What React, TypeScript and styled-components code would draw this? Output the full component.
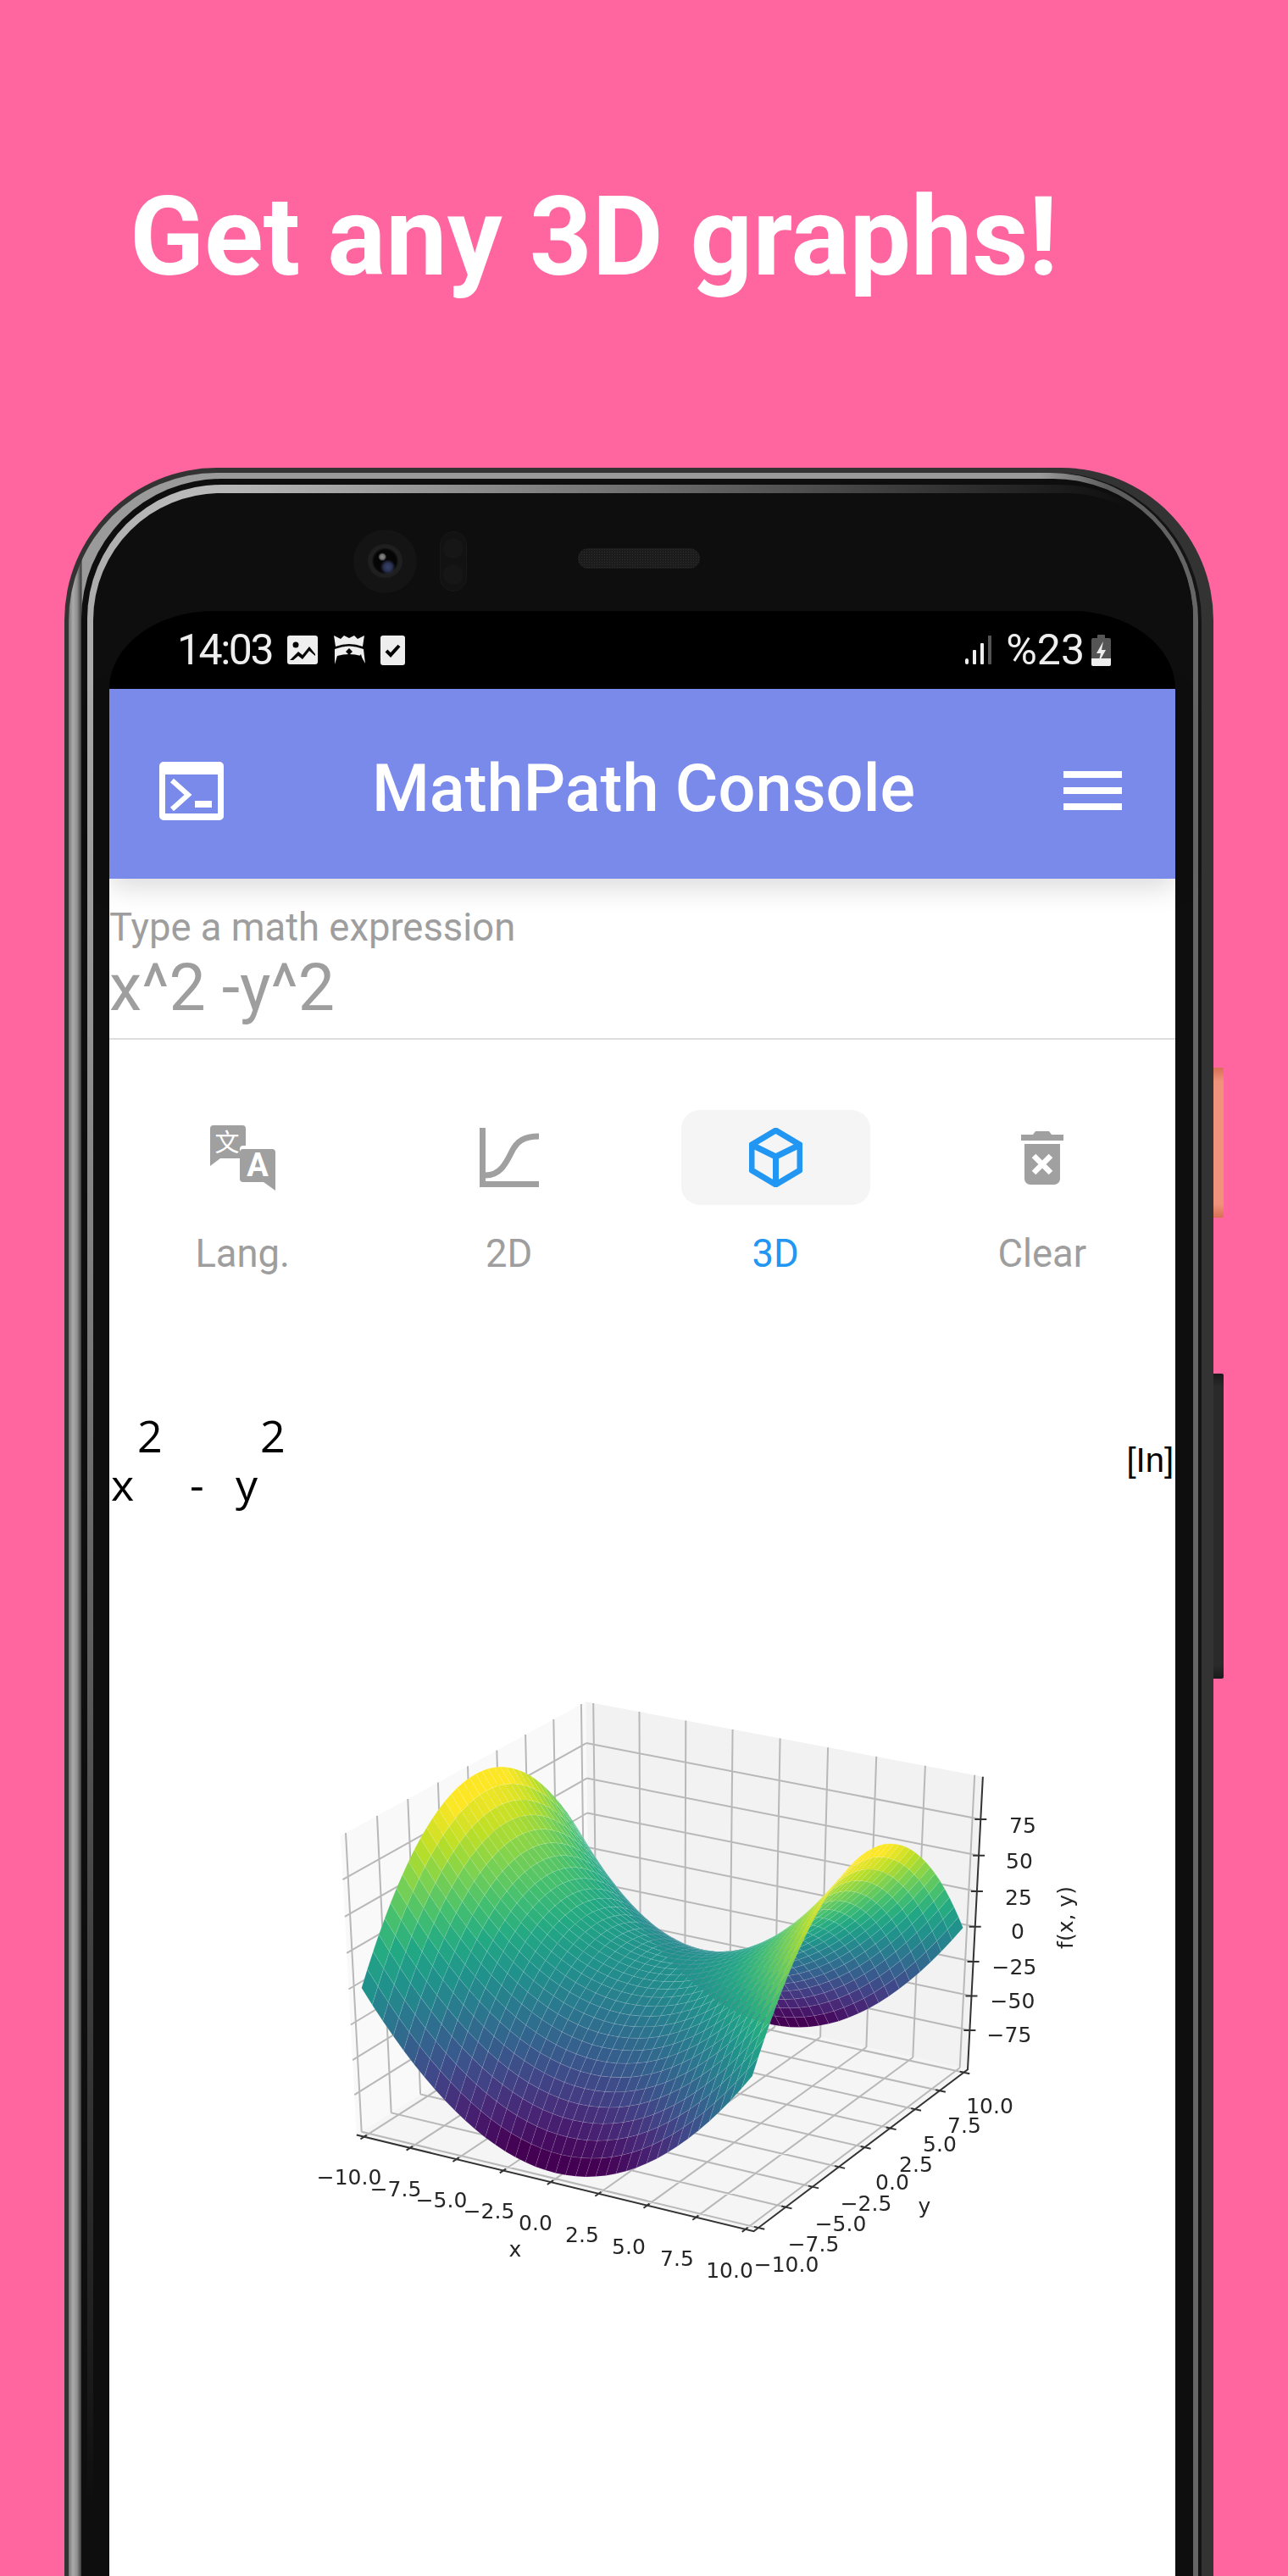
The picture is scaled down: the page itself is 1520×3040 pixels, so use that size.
import { useMemo } from 'react';
import styled, { createGlobalStyle } from 'styled-components';

const GlobalStyle = createGlobalStyle`
  html, body {
    margin: 0;
    padding: 0;
    background: #ff659f;
  }
`;

const Page = styled.div`
  width: 1520px;
  height: 3040px;
  overflow: hidden;
  background: #ff659f;
  font-family: Roboto, sans-serif;
`;

const Headline = styled.h1`
  margin: 0;
  height: 552px;
  box-sizing: border-box;
  padding: 204px 0 0 153px;
  color: #fff;
  font-size: 129px;
  line-height: 152px;
  font-weight: 700;
  white-space: nowrap;
`;

const PhoneWrap = styled.div`
  position: relative;
  width: 1356px;
  margin-left: 76px;
`;

const SideButton = styled.div<{ $top: number; $height: number; $body: string; $cap: string }>`
  position: absolute;
  left: 100%;
  top: ${(p) => p.$top}px;
  width: 12px;
  height: ${(p) => p.$height}px;
  border-radius: 0 2px 2px 0;
  background: linear-gradient(
    180deg,
    ${(p) => p.$cap} 0,
    ${(p) => p.$body} 16px,
    ${(p) => p.$body} calc(100% - 16px),
    ${(p) => p.$cap} 100%
  );
`;

const Frame = styled.div`
  background: #333;
  padding: 6px 18px 0 5px;
  border-radius: 180px 180px 0 0;
`;

const Shine = styled.div`
  padding: 7px 6px 0 15px;
  border-radius: 175px 175px 0 0;
  box-shadow: 4px 0 0 #141414;
  background: linear-gradient(
    90deg,
    #777 0,
    #aaa 5px,
    #909090 10px,
    #3c3c3c 15px,
    #9a9a9a 16px,
    #9a9a9a 86%,
    #5c5c5c 92%,
    #666 100%
  );
`;

const Gap = styled.div`
  background: #0e0e0e;
  padding: 7px 0 0 7px;
  border-radius: 165px 165px 0 0;
`;

const Band = styled.div`
  padding: 10px 0 0 7px;
  border-radius: 158px 158px 0 0;
  background: radial-gradient(1100px 2300px at 130px 100px, #c0c0c0 0%, #6a6a6a 50%, #0e0e0e 100%);
`;

const Bezel = styled.div`
  background: #0e0e0e;
  padding: 0 21px 0 19px;
  border-radius: 150px 150px 0 0;
`;

const SensorRow = styled.div`
  display: flex;
  align-items: center;
  height: 139px;
  box-sizing: border-box;
  padding: 21px 0 0 288px;
`;

const Camera = styled.div`
  display: flex;
  align-items: center;
  justify-content: center;
  width: 75px;
  height: 75px;
  border-radius: 50%;
  background: #141414;
`;

const Lens = styled.div`
  width: 41px;
  height: 40px;
  border-radius: 50%;
  background:
    radial-gradient(circle at 42% 38%, #8c8c8c 0, #6a6a6a 3px, transparent 5px),
    radial-gradient(circle at 58% 68%, #39446b 0, #2a3152 5px, transparent 9px),
    radial-gradient(circle at 50% 50%, #050505 0, #050505 13px, #202020 16px, #1a1a1a 100%);
`;

const SensorPill = styled.div`
  display: flex;
  flex-direction: column;
  align-items: center;
  justify-content: space-between;
  width: 32px;
  height: 71px;
  box-sizing: border-box;
  padding: 7px 0;
  margin-left: 27px;
  border-radius: 16px;
  background: #121212;
  border: 1px solid #181818;
`;

const SensorDot = styled.div`
  width: 24px;
  height: 24px;
  border-radius: 50%;
  background: #161616;
`;

const Speaker = styled.div`
  width: 144px;
  height: 24px;
  margin: 0 0 6px 131px;
  border-radius: 12px;
  background-color: #1c1c1c;
  background-image: radial-gradient(#2e2e2e 1px, transparent 1px);
  background-size: 3px 3px;
`;

const Screen = styled.div`
  height: 2400px;
  display: flex;
  flex-direction: column;
`;

const ScreenBody = styled.div`
  flex: 1;
  background: #fff;
`;

const StatusBar = styled.div`
  display: flex;
  align-items: center;
  justify-content: space-between;
  height: 92px;
  box-sizing: border-box;
  padding: 0 76px 0 80px;
  background: #000;
  border-radius: 123px 123px 0 0 / 92px 92px 0 0;
  color: #eee;
  font-size: 50px;
`;

const StatusGroup = styled.div<{ $gap: number }>`
  display: flex;
  align-items: center;
  gap: ${(p) => p.$gap}px;
`;

const StatusText = styled.span`
  letter-spacing: -2.5px;
  line-height: 48px;
`;

const StatusPercent = styled.span`
  line-height: 48px;
  margin-right: -9px;
`;

const AppBar = styled.header`
  position: relative;
  display: flex;
  align-items: center;
  justify-content: space-between;
  height: 224px;
  box-sizing: border-box;
  padding: 16px 63px 0 59px;
  background: #7a8aea;
  box-shadow: 0 8px 32px rgba(0, 0, 0, 0.16);
  color: #fff;
`;

const AppTitle = styled.div`
  font-size: 77.6px;
  font-weight: 500;
  line-height: 90px;
  margin-top: -4px;
`;

const Hamburger = styled.div`
  display: flex;
  flex-direction: column;
  gap: 11px;
  width: 69px;
`;

const HamburgerBar = styled.div`
  height: 8px;
  background: #fff;
`;

const Field = styled.div`
  padding: 32px 0 14px;
  border-bottom: 2px solid #ddd;
  color: #9e9e9e;
`;

const FieldLabel = styled.div`
  font-size: 45.4px;
  line-height: 52px;
`;

const FieldValue = styled.div`
  font-size: 77px;
  line-height: 90px;
`;

const Toolbar = styled.div`
  display: grid;
  grid-template-columns: repeat(4, 1fr);
  margin-top: 83px;
`;

const ToolButton = styled.div<{ $active?: boolean }>`
  display: flex;
  flex-direction: column;
  align-items: center;
  gap: 32px;
  color: ${(p) => (p.$active ? '#2196f3' : '#9e9e9e')};
`;

const ToolIcon = styled.div<{ $active?: boolean }>`
  display: flex;
  align-items: center;
  justify-content: center;
  width: 223px;
  height: 112px;
  border-radius: 22px;
  background: ${(p) => (p.$active ? '#f5f5f5' : 'transparent')};
`;

const ToolLabel = styled.div`
  font-size: 45.4px;
  line-height: 52px;
`;

const MathRow = styled.div`
  display: flex;
  justify-content: space-between;
  align-items: flex-start;
  margin-top: 159px;
  padding: 0 2px;
`;

const MathGrid = styled.div`
  display: grid;
  grid-template-columns: 31px 62px 54px 29px auto;
  grid-auto-rows: 57px;
  font-family: 'Open Sans', sans-serif;
  font-size: 52px;
  line-height: 57px;
  color: #000;
`;

const MathCell = styled.span<{ $col: number; $row: number }>`
  grid-column: ${(p) => p.$col};
  grid-row: ${(p) => p.$row};
`;

const UnitTag = styled.div`
  margin-top: 36px;
  font-family: 'Liberation Sans', sans-serif;
  font-size: 40px;
  line-height: 44px;
  color: #000;
`;

const ChartSvg = styled.svg`
  display: block;
  margin-top: 4px;
  filter: blur(0.5px);
`;

const TickLabel = styled.text`
  font-family: 'DejaVu Sans', sans-serif;
  font-size: 25px;
  fill: #262626;
  text-anchor: middle;
  dominant-baseline: central;
`;

// same camera as mplot3d: elev 30, azim -60, dist 10
const project = (px: number, py: number, pz: number) => {
  const u = 0.866 * px + 0.5 * py;
  const v = -0.25 * px + 0.433 * py + 0.866 * pz;
  const depth = 0.433 * px - 0.75 * py + 0.5 * pz;
  const d = 10 - depth;
  return { x: 787 + (5410 * u) / d, y: 2309 - (4030 * v) / d, depth };
};

const pt = (px: number, py: number, pz: number) => {
  const p = project(px, py, pz);
  return `${p.x.toFixed(1)},${p.y.toFixed(1)}`;
};

const XY_RANGE = 20.83;
const Z_RANGE = 208.3;
const CELLS = 38;

const VIRIDIS = [
  [68, 1, 84],
  [72, 36, 117],
  [65, 68, 135],
  [53, 95, 141],
  [42, 120, 142],
  [33, 145, 140],
  [34, 168, 132],
  [68, 191, 112],
  [122, 209, 81],
  [189, 223, 38],
  [253, 231, 37],
];

const viridis = (t: number) => {
  const s = Math.min(0.9999, Math.max(0, t)) * 10;
  const i = Math.floor(s);
  const f = s - i;
  const c = VIRIDIS[i].map((a, k) => Math.round(a + (VIRIDIS[i + 1][k] - a) * f));
  return `rgb(${c[0]},${c[1]},${c[2]})`;
};

const TICKS = [-10, -7.5, -5, -2.5, 0, 2.5, 5, 7.5, 10];
const Z_TICKS = [-75, -50, -25, 0, 25, 50, 75];

const X_LABELS: [string, number, number][] = [
  ['−10.0', 412, 2568],
  ['−7.5', 467, 2582],
  ['−5.0', 521, 2595],
  ['−2.5', 577, 2608],
  ['0.0', 632, 2622],
  ['2.5', 687, 2636],
  ['5.0', 742, 2650],
  ['7.5', 799, 2664],
  ['10.0', 861, 2678],
  ['x', 608, 2653],
];

const Y_LABELS: [string, number, number][] = [
  ['−10.0', 928, 2671],
  ['−7.5', 960, 2647],
  ['−5.0', 992, 2623],
  ['−2.5', 1022, 2599],
  ['0.0', 1053, 2574],
  ['2.5', 1081, 2553],
  ['5.0', 1109, 2529],
  ['7.5', 1138, 2507],
  ['10.0', 1168, 2484],
  ['y', 1091, 2602],
];

const Z_LABELS: [string, number, number][] = [
  ['75', 1207, 2153],
  ['50', 1203, 2195],
  ['25', 1202, 2238],
  ['0', 1201, 2278],
  ['−25', 1197, 2320],
  ['−50', 1195, 2360],
  ['−75', 1191, 2400],
];

function SurfaceChart() {
  const cells = useMemo(() => {
    const out: { points: string; fill: string; depth: number }[] = [];
    const step = 20 / CELLS;
    for (let i = 0; i < CELLS; i++) {
      for (let j = 0; j < CELLS; j++) {
        const corners = [
          [-10 + i * step, -10 + j * step],
          [-10 + (i + 1) * step, -10 + j * step],
          [-10 + (i + 1) * step, -10 + (j + 1) * step],
          [-10 + i * step, -10 + (j + 1) * step],
        ];
        let zSum = 0;
        let depth = 0;
        const pts = corners.map(([x, y]) => {
          const z = x * x - y * y;
          zSum += z;
          depth += project(x / XY_RANGE, y / XY_RANGE, z / Z_RANGE).depth;
          return pt(x / XY_RANGE, y / XY_RANGE, z / Z_RANGE);
        });
        out.push({
          points: pts.join(' '),
          // the cell means never quite reach +-100
          fill: viridis((zSum / 4 + 90) / 180),
          depth,
        });
      }
    }
    return out.sort((a, b) => a.depth - b.depth);
  }, []);

  const gridLine = (a: number[], b: number[]) => {
    const p = project(a[0], a[1], a[2]);
    const q = project(b[0], b[1], b[2]);
    return `M${p.x.toFixed(1)} ${p.y.toFixed(1)}L${q.x.toFixed(1)} ${q.y.toFixed(1)}`;
  };

  const grid = useMemo(() => {
    let d = '';
    TICKS.forEach((t) => {
      const k = t / XY_RANGE;
      d += gridLine([k, -0.5, -0.5], [k, 0.5, -0.5]);
      d += gridLine([k, 0.5, -0.5], [k, 0.5, 0.5]);
      d += gridLine([-0.5, k, -0.5], [0.5, k, -0.5]);
      d += gridLine([-0.5, k, -0.5], [-0.5, k, 0.5]);
    });
    Z_TICKS.forEach((t) => {
      const k = t / Z_RANGE;
      d += gridLine([-0.5, -0.5, k], [-0.5, 0.5, k]);
      d += gridLine([-0.5, 0.5, k], [0.5, 0.5, k]);
    });
    return d;
  }, []);

  const ticks = useMemo(() => {
    let d = '';
    TICKS.forEach((t) => {
      const k = t / XY_RANGE;
      d += gridLine([k, -0.515, -0.5], [k, -0.49, -0.5]);
      d += gridLine([0.49, k, -0.5], [0.515, k, -0.5]);
    });
    Z_TICKS.forEach((t) => {
      const p = project(0.5, 0.5, t / Z_RANGE);
      d += `M${(p.x - 7).toFixed(1)} ${p.y.toFixed(1)}h14`;
    });
    return d;
  }, []);

  return (
    <ChartSvg width={1258} height={940} viewBox="129 1782 1258 940">
      <polygon
        points={[pt(-0.5, -0.5, -0.5), pt(-0.5, 0.5, -0.5), pt(-0.5, 0.5, 0.5), pt(-0.5, -0.5, 0.5)].join(' ')}
        fill="#f9f9f9"
      />
      <polygon
        points={[pt(-0.5, 0.5, -0.5), pt(0.5, 0.5, -0.5), pt(0.5, 0.5, 0.5), pt(-0.5, 0.5, 0.5)].join(' ')}
        fill="#f2f2f2"
      />
      <polygon
        points={[pt(-0.5, -0.5, -0.5), pt(0.5, -0.5, -0.5), pt(0.5, 0.5, -0.5), pt(-0.5, 0.5, -0.5)].join(' ')}
        fill="#f5f5f5"
      />
      <path d={grid} stroke="#b8b8b8" strokeWidth={2} fill="none" />
      {cells.map((c, i) => (
        <polygon key={i} points={c.points} fill={c.fill} stroke="#fff" strokeWidth={0.7} strokeOpacity={0.13} />
      ))}
      <polyline
        points={[pt(-0.5, -0.5, -0.5), pt(0.5, -0.5, -0.5), pt(0.5, 0.5, -0.5), pt(0.5, 0.5, 0.5)].join(' ')}
        stroke="#333"
        strokeWidth={2}
        fill="none"
      />
      <path d={ticks} stroke="#333" strokeWidth={2} fill="none" />
      {[...X_LABELS, ...Y_LABELS, ...Z_LABELS].map(([label, x, y], i) => (
        <TickLabel key={i} x={x} y={y}>
          {label}
        </TickLabel>
      ))}
      <TickLabel x={1257} y={2262} transform="rotate(-90 1257 2262)">
        f(x, y)
      </TickLabel>
    </ChartSvg>
  );
}

const GRAY = '#a0a0a0';
const BLUE = '#2196f3';

function App() {
  return (
    <Page>
      <GlobalStyle />
      <Headline>Get any 3D graphs!</Headline>
      <PhoneWrap>
        <SideButton $top={708} $height={177} $body="#f0937a" $cap="#d87057" />
        <SideButton $top={1069} $height={360} $body="#2a2a2a" $cap="#1a1a1a" />
        <Frame>
          <Shine>
            <Gap>
              <Band>
                <Bezel>
                  <SensorRow>
                    <Camera>
                      <Lens />
                    </Camera>
                    <SensorPill>
                      <SensorDot />
                      <SensorDot />
                    </SensorPill>
                    <Speaker />
                  </SensorRow>
                  <Screen>
                    <StatusBar>
                      <StatusGroup $gap={18}>
                        <StatusText>14:03</StatusText>
                        <svg width="36" height="34" viewBox="0 0 36 34">
                          <rect width="36" height="34" rx="3" fill="#eee" />
                          <circle cx="10" cy="11" r="3.5" fill="#000" />
                          <path d="M3 29 L13 19 L18 23 L26 13 L33 22 L33 24 L26 18 L18 28 L13 24 L7 29 Z" fill="#000" />
                        </svg>
                        <svg width="38" height="35" viewBox="0 0 38 35">
                          <path d="M1 0 L9 4 L13 0 L19 3 L25 0 L29 4 L37 0 L35 13 Q19 7 3 13 Z" fill="#eee" />
                          <path d="M2 16 Q19 9 36 16 L38 33 L33 24 Q19 20 5 24 L2 34 Z" fill="#eee" />
                          <path d="M19 15 L23 19 L19 23 L15 19 Z" fill="#000" />
                          <path d="M29 27 L33 22 L35 30 L30 33 Z" fill="#000" />
                        </svg>
                        <svg width="29" height="35" viewBox="0 0 29 35">
                          <rect width="29" height="35" rx="3" fill="#eee" />
                          <path d="M7 18 L12 23 L22 12" stroke="#000" strokeWidth="4" fill="none" />
                        </svg>
                      </StatusGroup>
                      <StatusGroup $gap={17}>
                        <svg width="31" height="34" viewBox="0 0 31 34">
                          <rect x="0" y="27" width="4" height="7" rx="2" fill="#eee" />
                          <rect x="9" y="17" width="4" height="17" rx="1" fill="#eee" />
                          <rect x="18" y="9" width="4" height="25" rx="1" fill="#eee" />
                          <rect x="27" y="0" width="4" height="34" rx="1" fill="#555" />
                        </svg>
                        <StatusPercent>%23</StatusPercent>
                        <svg width="23" height="37" viewBox="0 0 23 37">
                          <rect x="7" y="0" width="9" height="5" rx="1" fill="#555" />
                          <rect x="0" y="4" width="23" height="33" rx="2" fill="#555" />
                          <path d="M0 28 H23 V35 a2 2 0 0 1 -2 2 H2 a2 2 0 0 1 -2 -2 Z" fill="#eee" />
                          <path d="M14 8 L6 22 L11 22 L8 34 L17 18 L12 18 Z" fill="#eee" />
                        </svg>
                      </StatusGroup>
                    </StatusBar>
                    <ScreenBody>
                      <AppBar>
                        <svg width="76" height="69" viewBox="0 0 76 69">
                          <path
                            fillRule="evenodd"
                            d="M5 0 H71 a5 5 0 0 1 5 5 V64 a5 5 0 0 1 -5 5 H5 a5 5 0 0 1 -5 -5 V5 a5 5 0 0 1 5 -5 Z M7 15 V61 H69 V15 Z"
                            fill="#fff"
                          />
                          <path d="M15 22 L34 39 L15 56" stroke="#fff" strokeWidth="6" fill="none" />
                          <rect x="42" y="46" width="20" height="8" fill="#fff" />
                        </svg>
                        <AppTitle>MathPath Console</AppTitle>
                        <Hamburger>
                          <HamburgerBar />
                          <HamburgerBar />
                          <HamburgerBar />
                        </Hamburger>
                      </AppBar>
                      <Field>
                        <FieldLabel>Type a math expression</FieldLabel>
                        <FieldValue>x^2 -y^2</FieldValue>
                      </Field>
                      <Toolbar>
                        <ToolButton>
                          <ToolIcon>
                            <svg width="77" height="77" viewBox="0 0 77 77">
                              <path d="M4 0 H38 a4 4 0 0 1 4 4 V39 H12 L0 48 V4 a4 4 0 0 1 4 -4 Z" fill={GRAY} />
                              <path d="M39 24 H73 a4 4 0 0 1 4 4 V77 L62 67 H39 a4 4 0 0 1 -4 -4 V28 a4 4 0 0 1 4 -4 Z" fill="#fff" />
                              <path d="M39 28 H73 a4 4 0 0 1 4 4 V77 L63 67 H39 a4 4 0 0 1 -4 -4 V32 a4 4 0 0 1 4 -4 Z" fill={GRAY} />
                              <text x="20" y="31" fontFamily="'Noto Sans CJK SC', sans-serif" fontSize="29" fill="#fff" textAnchor="middle">
                                文
                              </text>
                              <text x="56" y="60" fontFamily="Roboto, sans-serif" fontWeight="700" fontSize="38" fill="#fff" textAnchor="middle">
                                A
                              </text>
                            </svg>
                          </ToolIcon>
                          <ToolLabel>Lang.</ToolLabel>
                        </ToolButton>
                        <ToolButton>
                          <ToolIcon>
                            <svg width="70" height="70" viewBox="0 0 70 70">
                              <path d="M0 0 H7 V63 H70 V70 H0 Z" fill={GRAY} />
                              <path d="M7 56 C25 56 32 40 38 28 C44 16 52 10 70 10" stroke={GRAY} strokeWidth="7" fill="none" />
                            </svg>
                          </ToolIcon>
                          <ToolLabel>2D</ToolLabel>
                        </ToolButton>
                        <ToolButton $active>
                          <ToolIcon $active>
                            <svg width="63" height="70" viewBox="0 0 63 70">
                              <path
                                d="M31.5 3 L60 20 V50 L31.5 67 L3 50 V20 Z M3 20 L31.5 34 L60 20 M31.5 34 V67"
                                stroke={BLUE}
                                strokeWidth="7"
                                strokeLinejoin="round"
                                fill="none"
                              />
                            </svg>
                          </ToolIcon>
                          <ToolLabel>3D</ToolLabel>
                        </ToolButton>
                        <ToolButton>
                          <ToolIcon>
                            <svg width="50" height="63" viewBox="0 0 50 63">
                              <path d="M0 4 H14 L17 0 H33 L36 4 H50 V11 H0 Z" fill={GRAY} />
                              <path d="M4 15 H46 V56 a7 7 0 0 1 -7 7 H11 a7 7 0 0 1 -7 -7 Z" fill={GRAY} />
                              <path d="M15 29 L35 49 M35 29 L15 49" stroke="#fff" strokeWidth="6.5" />
                            </svg>
                          </ToolIcon>
                          <ToolLabel>Clear</ToolLabel>
                        </ToolButton>
                      </Toolbar>
                      <MathRow>
                        <MathGrid>
                          <MathCell $col={2} $row={1}>2</MathCell>
                          <MathCell $col={5} $row={1}>2</MathCell>
                          <MathCell $col={1} $row={2}>x</MathCell>
                          <MathCell $col={3} $row={2}>-</MathCell>
                          <MathCell $col={4} $row={2}>y</MathCell>
                        </MathGrid>
                        <UnitTag>[In]</UnitTag>
                      </MathRow>
                      <SurfaceChart />
                    </ScreenBody>
                  </Screen>
                </Bezel>
              </Band>
            </Gap>
          </Shine>
        </Frame>
      </PhoneWrap>
    </Page>
  );
}

export default App;
